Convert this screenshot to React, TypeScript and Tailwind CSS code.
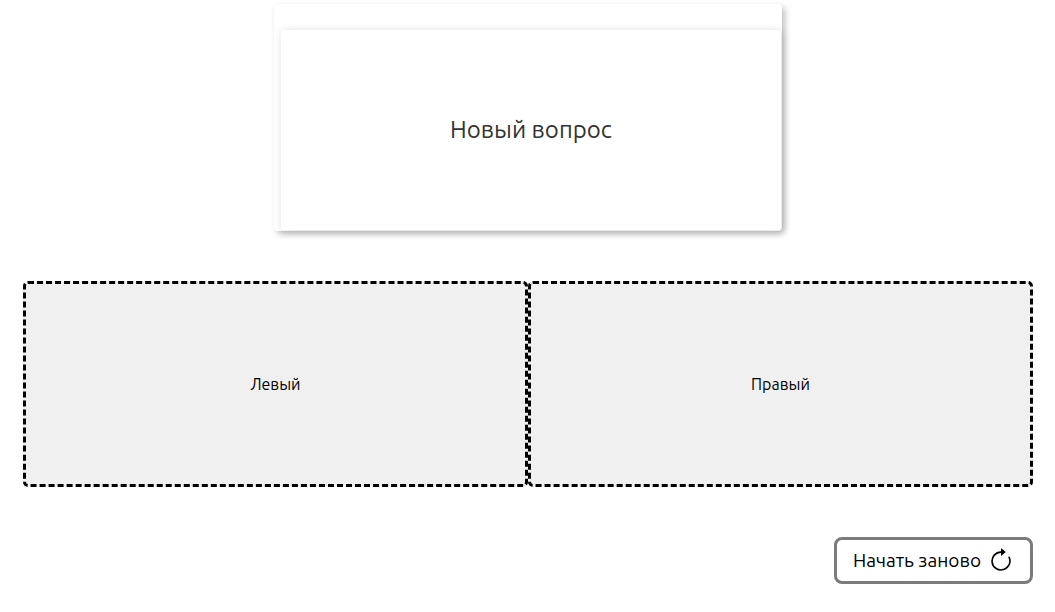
import { BsArrowClockwise } from "react-icons/bs";

function Zone({ label }: { label: string }) {
  return (
    <button
      type="button"
      className="flex h-[206px] flex-1 items-center justify-center rounded-[5px] border-[3px] border-dashed border-black bg-[#f0f0f0] text-base text-black"
    >
      {label}
    </button>
  );
}

export default function App() {
  return (
    <main className="flex flex-col bg-white pt-1 pr-[22px] pb-7 pl-[23px] font-['Ubuntu','Noto_Sans',sans-serif]">
      <section className="mx-auto w-full max-w-[508px] rounded-[4px] bg-white pt-[26px] pr-px pb-px pl-[7px] shadow-[3px_3px_6px_rgba(0,0,0,0.25)]">
        <div className="flex h-[200px] items-center justify-center rounded-[3px] bg-white shadow-[1px_1px_8px_rgba(0,0,0,0.15)]">
          <h1 className="text-2xl text-[#333]">Новый вопрос</h1>
        </div>
      </section>
      <div className="mt-[50px] flex">
        <Zone label="Левый" />
        <Zone label="Правый" />
      </div>
      <button
        type="button"
        className="mt-[50px] flex h-[47px] items-center gap-[7px] self-end rounded-[8px] border-[3px] border-[#7b7b7b] bg-white px-4 text-[19px] text-black"
      >
        Начать заново
        <BsArrowClockwise className="size-[26px]" aria-hidden="true" />
      </button>
    </main>
  );
}
